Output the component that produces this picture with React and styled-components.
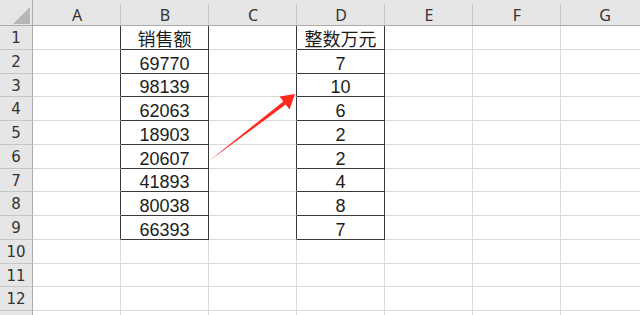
import React from "react";
import styled, { createGlobalStyle } from "styled-components";

const Global = createGlobalStyle`
  html, body { margin: 0; padding: 0; background: #fff; overflow: hidden; }
  #root { width: 640px; height: 315px; }
`;

const COLS = ["A", "B", "C", "D", "E", "F", "G"];
const ROW_HEIGHTS = [24, 24, 23, 24, 24, 24, 23, 24, 24, 24, 23, 24];
const GRID = "#d9d9d9";
const DARK = "#3a3a3a";

const DATA = {
  B: ["销售额", "69770", "98139", "62063", "18903", "20607", "41893", "80038", "66393"],
  D: ["整数万元", "7", "10", "6", "2", "2", "4", "8", "7"],
};

const Sheet = styled.div`
  position: relative;
  width: 640px;
  height: 315px;
  overflow: hidden;
  display: grid;
  grid-template-columns: 33px repeat(7, 88px);
  grid-template-rows: 26px ${ROW_HEIGHTS.map((h) => h + "px").join(" ")} 24px;
`;

const Corner = styled.div`
  box-sizing: border-box;
  background: #e6e6e6;
  border-bottom: 1px solid #ababab;
  border-right: 1px solid #ababab;
  display: flex;
  justify-content: flex-end;
  align-items: flex-end;
  padding: 0 2px 1px 0;
`;

const ColHead = styled.div`
  box-sizing: border-box;
  background: linear-gradient(#c8c8c8, #c8c8c8) right 4px / 1px calc(100% - 4px) no-repeat, #e6e6e6;
  border-bottom: 1px solid #ababab;
  display: flex;
  justify-content: center;
  align-items: flex-end;
  padding-bottom: 2px;
  font-family: "Noto Sans", "Liberation Sans", sans-serif;
  font-size: 16px;
  line-height: 16px;
  color: #333;
`;

const RowHead = styled.div`
  box-sizing: border-box;
  background: #e6e6e6;
  border-right: 1px solid #ababab;
  border-bottom: 1px solid #c6c6c6;
  display: flex;
  justify-content: center;
  align-items: center;
  padding-top: 2px;
  font-family: "DejaVu Sans", sans-serif;
  font-size: 15px;
  line-height: 15px;
  color: #333;
`;

const Cell = styled.div`
  box-sizing: border-box;
  border-right: 1px solid ${(p) => (p.$darkRight ? DARK : GRID)};
  border-bottom: 1px solid ${(p) => (p.$darkBottom ? DARK : GRID)};
  display: flex;
  justify-content: center;
  align-items: flex-end;
  font-family: "Liberation Sans", "Noto Sans CJK SC", sans-serif;
  font-size: 18px;
  line-height: 18px;
  color: #1c1c1c;
  white-space: nowrap;
  overflow: hidden;
`;

const Arrow = styled.svg`
  position: absolute;
  left: 0;
  top: 0;
  pointer-events: none;
`;

export default function App() {
  const rows = ROW_HEIGHTS.map((_, i) => i + 1);
  return (
    <>
      <Global />
      <Sheet>
        <Corner>
          <svg width="17" height="17" viewBox="0 0 17 17">
            <polygon points="0,17 17,17 17,0" fill="#b7b7b7" />
          </svg>
        </Corner>
        {COLS.map((c) => (
          <ColHead key={c}>{c}</ColHead>
        ))}
        {rows.map((r) => (
          <React.Fragment key={r}>
            <RowHead>{r}</RowHead>
            {COLS.map((c) => {
              const inTable = r <= 9;
              const boxed = inTable && (c === "B" || c === "D");
              const beforeBox = inTable && (c === "A" || c === "C");
              const value = DATA[c] ? DATA[c][r - 1] : undefined;
              return (
                <Cell key={c} $darkRight={boxed || beforeBox} $darkBottom={boxed}>
                  {value}
                </Cell>
              );
            })}
          </React.Fragment>
        ))}
        <RowHead />
        {COLS.map((c) => (
          <Cell key={"last-" + c} />
        ))}
        <Arrow width="640" height="315" viewBox="0 0 640 315">
          <polygon
            points="295,94 289.5,109.5 285.7,104.6 209,161 283.3,101.4 279.5,96.5"
            fill="#ff2a1e"
          />
        </Arrow>
      </Sheet>
    </>
  );
}
